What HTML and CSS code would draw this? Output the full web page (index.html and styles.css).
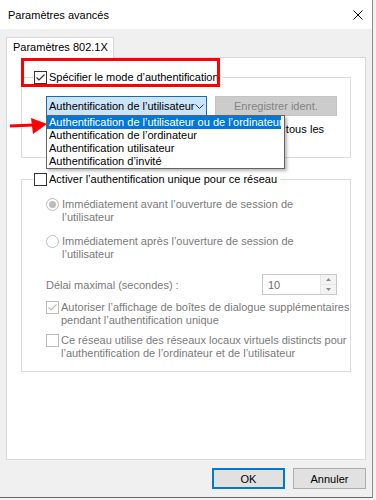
FILE: index.html
```html
<!DOCTYPE html>
<html lang="fr">
<head>
<meta charset="utf-8">
<title>Paramètres avancés</title>
<link rel="stylesheet" href="styles.css">
</head>
<body>
<div class="screen">
  <div class="dialog">
    <div class="titlebar">
      <span class="title">Paramètres avancés</span>
      <svg class="close" width="10" height="10" viewBox="0 0 10 10"><path d="M0.5 0.5 L9.5 9.5 M9.5 0.5 L0.5 9.5" stroke="#000" stroke-width="1" fill="none"/></svg>
    </div>
    <div class="client">
      <div class="tabs"><div class="tab">Paramètres 802.1X</div></div>
      <div class="panel">
        <fieldset class="group">
          <legend>
            <span class="chk">
              <span class="box"><svg width="11" height="11" viewBox="0 0 11 11"><polyline points="1.5,5.5 4,8 9.5,2.5" stroke="#333" stroke-width="1.2" fill="none"/></svg></span>
              <span class="legend-text">Spécifier le mode d’authentification</span>
            </span>
          </legend>
          <div class="gbody g1">
            <div class="combo-row">
              <div class="combo-wrap">
                <div class="combo">
                  <span>Authentification de l’utilisateur</span>
                  <svg width="9" height="5" viewBox="0 0 9 5"><polyline points="0.5,0.5 4.5,4.5 8.5,0.5" stroke="#333" stroke-width="1" fill="none"/></svg>
                </div>
                <ul class="dropdown">
                  <li class="sel">Authentification de l’utilisateur ou de l’ordinateur</li>
                  <li>Authentification de l’ordinateur</li>
                  <li>Authentification utilisateur</li>
                  <li>Authentification d’invité</li>
                </ul>
              </div>
              <div class="btn-dis">Enregistrer ident.</div>
            </div>
            <div class="opt m7">
              <span class="box covered"></span>
              <span class="lbl wide"><span class="covered">Supprimer les informations d’identification de </span>tous les<br><span class="covered">utilisateurs</span></span>
            </div>
          </div>
        </fieldset>

        <fieldset class="group g2">
          <legend>
            <span class="chk">
              <span class="box"></span>
              <span>Activer l’authentification unique pour ce réseau</span>
            </span>
          </legend>
          <div class="gbody">
            <div class="opt">
              <span class="radio on"></span>
              <span class="lbl dis">Immédiatement avant l’ouverture de session de<br>l’utilisateur</span>
            </div>
            <div class="opt m11">
              <span class="radio"></span>
              <span class="lbl dis">Immédiatement après l’ouverture de session de<br>l’utilisateur</span>
            </div>
            <div class="spin-row">
              <span class="dis">Délai maximal (secondes) :</span>
              <div class="spin">
                <span class="spin-val">10</span>
                <span class="spin-btns">
                  <span><svg width="5" height="3" viewBox="0 0 5 3"><polygon points="0,3 2.5,0 5,3" fill="#8a8a8a"/></svg></span>
                  <span><svg width="5" height="3" viewBox="0 0 5 3"><polygon points="0,0 2.5,3 5,0" fill="#8a8a8a"/></svg></span>
                </span>
              </div>
            </div>
            <div class="opt m6">
              <span class="box dis"><svg width="11" height="11" viewBox="0 0 11 11"><polyline points="1.5,5.5 4,8 9.5,2.5" stroke="#bcbcbc" stroke-width="1.2" fill="none"/></svg></span>
              <span class="lbl dis">Autoriser l’affichage de boîtes de dialogue supplémentaires<br>pendant l’authentification unique</span>
            </div>
            <div class="opt m7">
              <span class="box dis"></span>
              <span class="lbl dis">Ce réseau utilise des réseaux locaux virtuels distincts pour<br>l’authentification de l’ordinateur et de l’utilisateur</span>
            </div>
          </div>
        </fieldset>
      </div>
      <div class="buttons">
        <div class="btn default">OK</div>
        <div class="btn">Annuler</div>
      </div>
    </div>
  </div>

  <div class="annot-box"></div>
  <svg class="annot-arrow" width="42" height="24" viewBox="0 0 42 24">
    <line x1="2" y1="10" x2="26" y2="9" stroke="#f00" stroke-width="3"/>
    <polygon points="23,2 39,8 25,18" fill="#f00"/>
  </svg>
</div>
</body>
</html>
```
FILE: styles.css
```css
* { box-sizing: border-box; }
html, body { margin: 0; padding: 0; }
body {
  background: #f2f2f2;
  font-family: "Liberation Sans", Arial, sans-serif;
  font-size: 11px;
  color: #000;
}
.screen { position: relative; width: 376px; height: 500px; overflow: hidden; }
.dialog {
  width: 373px;
  height: 498px;
  background: #f0f0f0;
  border-right: 1px solid #8c8c8c;
  border-bottom: 1px solid #666;
  display: flex;
  flex-direction: column;
}
.titlebar {
  flex: none;
  height: 29px;
  background: #fff;
  display: flex;
  align-items: center;
  justify-content: space-between;
  padding: 0 9px 0 8px;
}
.title { line-height: 14px; }
.close { display: block; }
.client { padding: 8px 6px 0 6px; display: flex; flex-direction: column; }
.tabs { display: flex; height: 20px; position: relative; z-index: 1; }
.tab {
  width: 108px;
  height: 21px;
  background: #fff;
  border: 1px solid #d9d9d9;
  border-bottom: none;
  padding-left: 6px;
  line-height: 19px;
}
.panel {
  height: 403px;
  background: #fff;
  border: 1px solid #d9d9d9;
  padding: 13px 14px 0 14px;
}
.group {
  border: 1px solid #dcdcdc;
  margin: 0;
  padding: 0;
  min-width: 0;
}
.group.g2 { margin-top: 15px; }
.group legend { padding: 0 3px 0 1px; margin-left: 11px; }
.chk { display: flex; align-items: center; gap: 2px; line-height: 13px; }
.legend-text { letter-spacing: -0.03px; }
.box {
  flex: none;
  width: 13px;
  height: 13px;
  border: 1px solid #333;
  background: #fff;
  display: block;
}
.box svg { display: block; }
.box.dis { border-color: #bcbcbc; }
.covered { visibility: hidden; }
.gbody { padding: 12px 13px 8px 24px; }
.g2 .gbody { padding-bottom: 11px; }
.combo-row { display: flex; gap: 8px; height: 20px; }
.combo-wrap { position: relative; width: 166px; }
.combo {
  height: 20px;
  border: 1px solid #1c6bb0;
  background: #cce4f7;
  display: flex;
  align-items: center;
  justify-content: space-between;
  padding: 0 2px 0 2px;
  white-space: nowrap;
}
.combo svg { display: block; margin-top: 1px; }
.dropdown {
  position: absolute;
  left: 0;
  top: 19px;
  width: 239px;
  margin: 0;
  padding: 0 3px 0 0;
  list-style: none;
  background: #fff;
  border: 1px solid #646464;
  box-shadow: 2px 2px 3px rgba(0, 0, 0, 0.28);
  z-index: 5;
  overflow: hidden;
}
.dropdown li { height: 13px; line-height: 13px; padding-left: 2px; white-space: nowrap; }
.dropdown li.sel { background: #0078d7; color: #fff; }
.btn-dis {
  width: 126px;
  height: 20px;
  background: #cccccc;
  border: 1px solid #c4c4c4;
  color: #838383;
  display: flex;
  align-items: center;
  justify-content: center;
}
.opt { display: flex; align-items: flex-start; gap: 2px; }
.lbl { line-height: 13px; white-space: nowrap; }
.lbl.wide { letter-spacing: 0.06px; }
.dis { color: #7a7a7a; }
.m6 { margin-top: 6px; }
.m7 { margin-top: 7px; }
.m11 { margin-top: 11px; }
.radio {
  flex: none;
  width: 13px;
  height: 13px;
  margin-right: 1px;
  border: 1px solid #bcbcbc;
  border-radius: 50%;
  background: #fff;
  display: flex;
  align-items: center;
  justify-content: center;
}
.radio.on::after {
  content: "";
  width: 7px;
  height: 7px;
  border-radius: 50%;
  background: #bcbcbc;
}
.spin-row {
  margin-top: 13px;
  height: 21px;
  display: flex;
  align-items: center;
  justify-content: space-between;
}
.spin {
  width: 75px;
  height: 21px;
  border: 1px solid #c8c8c8;
  background: #fff;
  display: flex;
  align-items: stretch;
}
.spin-val { flex: 1; padding-left: 5px; color: #6d6d6d; display: flex; align-items: center; }
.spin-btns {
  width: 16px;
  display: flex;
  flex-direction: column;
  border-left: 1px solid #e6e6e6;
}
.spin-btns span {
  flex: 1;
  display: flex;
  align-items: center;
  justify-content: center;
  background: #f3f3f3;
}
.spin-btns span + span { border-top: 1px solid #e6e6e6; }
.spin-btns svg { display: block; }
.buttons { display: flex; justify-content: flex-end; gap: 8px; margin-top: 8px; }
.btn {
  width: 73px;
  height: 21px;
  background: #e1e1e1;
  border: 1px solid #adadad;
  display: flex;
  align-items: center;
  justify-content: center;
}
.btn.default { border: 2px solid #0078d7; }
.annot-box {
  position: absolute;
  left: 21px;
  top: 58px;
  width: 199px;
  height: 29px;
  border: 3px solid #f00;
}
.annot-arrow { position: absolute; left: 8px; top: 116px; }
```
